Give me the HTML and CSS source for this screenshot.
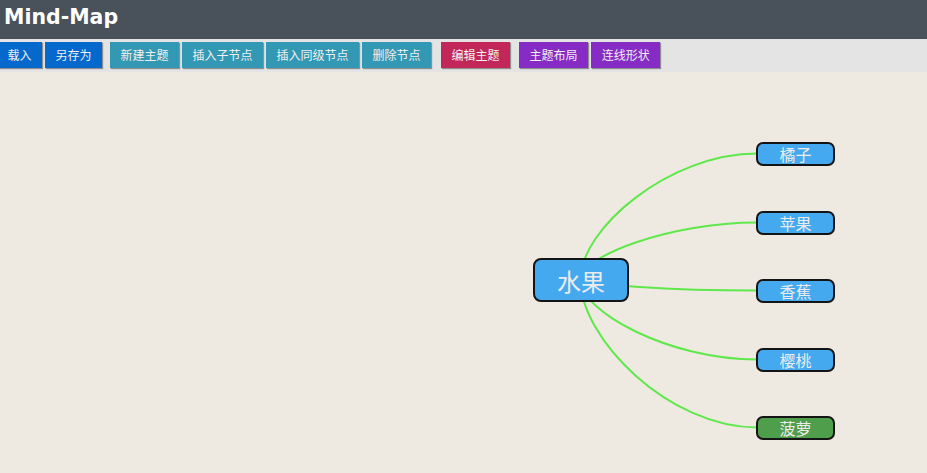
FILE: index.html
```html
<!DOCTYPE html>
<html lang="zh">
<head>
<meta charset="utf-8">
<title>Mind-Map</title>
<link rel="stylesheet" href="styles.css">
</head>
<body>
<header class="header">
  <h1 class="title">Mind-Map</h1>
</header>
<nav class="toolbar">
  <div class="group group-file">
    <button class="btn btn-blue btn-first">载入</button>
    <button class="btn btn-blue">另存为</button>
  </div>
  <div class="group group-edit">
    <button class="btn btn-teal">新建主题</button>
    <button class="btn btn-teal">插入子节点</button>
    <button class="btn btn-teal">插入同级节点</button>
    <button class="btn btn-teal">删除节点</button>
  </div>
  <div class="group group-topic">
    <button class="btn btn-red">编辑主题</button>
  </div>
  <div class="group group-layout">
    <button class="btn btn-purple">主题布局</button>
    <button class="btn btn-purple">连线形状</button>
  </div>
</nav>
<main class="canvas">
  <svg class="links" width="927" height="401" viewBox="0 0 927 401">
    <path d="M580.5 207.5 C580.5 157.1 668.75 81.5 757 81.5"/>
    <path d="M580.5 207.5 C580.5 184.7 668.75 150.5 757 150.5"/>
    <path d="M580.5 207.5 C580.5 211.9 668.75 218.5 757 218.5"/>
    <path d="M580.5 207.5 C580.5 239.5 668.75 287.5 757 287.5"/>
    <path d="M580.5 207.5 C580.5 266.7 668.75 355.5 757 355.5"/>
  </svg>
  <div class="node node-root">水果</div>
  <div class="node node-child n1">橘子</div>
  <div class="node node-child n2">苹果</div>
  <div class="node node-child n3">香蕉</div>
  <div class="node node-child n4">樱桃</div>
  <div class="node node-child n5 node-green">菠萝</div>
</main>
</body>
</html>
```
FILE: styles.css
```css
html, body {
  margin: 0;
  padding: 0;
  overflow: hidden;
  background: #eeeae1;
}

body {
  width: 927px;
  height: 473px;
  font-family: "Noto Sans CJK SC", "DejaVu Sans", sans-serif;
}

.header {
  height: 39px;
  background: #49515b;
  padding: 0 4px;
  box-sizing: border-box;
}

.title {
  margin: 0;
  font-family: "DejaVu Sans", sans-serif;
  font-weight: bold;
  font-size: 20.5px;
  line-height: 35px;
  color: #ffffff;
}

.toolbar {
  height: 33px;
  background: #e4e4e4;
  display: flex;
  align-items: flex-start;
  padding-top: 3px;
  box-sizing: border-box;
}

.group {
  display: flex;
  gap: 3px;
}

.group-edit { margin-left: 8px; }
.group-topic { margin-left: 10px; }
.group-layout { margin-left: 9px; }

.btn {
  height: 26px;
  padding: 0 10.5px;
  border: 0;
  margin: 0;
  font-family: "Noto Sans CJK SC", sans-serif;
  font-size: 12px;
  line-height: 26px;
  color: #f0f0f0;
  box-shadow: 1px 1px 1px #8f8f8f;
  cursor: pointer;
}

.btn-first { margin-left: -3px; }

.btn-blue { background: #0568cc; }
.btn-teal { background: #3398b4; }
.btn-red { background: #c2275a; }
.btn-purple { background: #862bc3; }

.canvas {
  position: relative;
  height: 401px;
  background: #eeeae1;
}

.links {
  position: absolute;
  left: 0;
  top: 0;
}

.links path {
  fill: none;
  stroke: #5fe84a;
  stroke-width: 2;
}

.node {
  position: absolute;
  box-sizing: border-box;
  border: 2px solid #141414;
  background: #44a9ee;
  color: #ececec;
  display: flex;
  align-items: center;
  justify-content: center;
  font-family: "Noto Sans CJK SC", sans-serif;
}

.node-root {
  left: 533px;
  top: 186px;
  width: 96px;
  height: 44px;
  border-radius: 8px;
  font-size: 24px;
}

.node-child {
  left: 756px;
  width: 79px;
  height: 24px;
  border-radius: 7px;
  font-size: 16px;
}

.n1 { top: 70px; }
.n2 { top: 139px; }
.n3 { top: 207px; }
.n4 { top: 276px; }
.n5 { top: 344px; }

.node-green { background: #4f9e4b; }
```
